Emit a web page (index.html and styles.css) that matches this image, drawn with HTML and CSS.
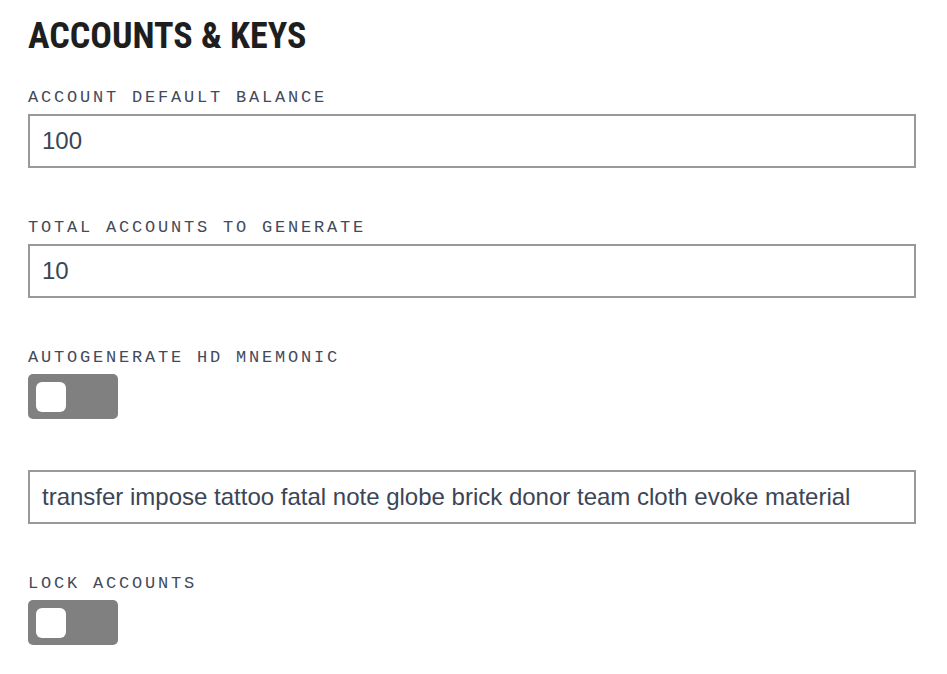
FILE: index.html
```html
<!DOCTYPE html>
<html>
<head>
<meta charset="utf-8">
<link rel="stylesheet" href="styles.css">
</head>
<body>
<div class="page">
  <h1 class="title">ACCOUNTS &amp; KEYS</h1>
  <div class="group">
    <div class="label">ACCOUNT DEFAULT BALANCE</div>
    <div class="input">100</div>
  </div>
  <div class="group">
    <div class="label">TOTAL ACCOUNTS TO GENERATE</div>
    <div class="input">10</div>
  </div>
  <div class="group group-toggle">
    <div class="label">AUTOGENERATE HD MNEMONIC</div>
    <div class="toggle"><span class="knob"></span></div>
  </div>
  <div class="group">
    <div class="input">transfer impose tattoo fatal note globe brick donor team cloth evoke material</div>
  </div>
  <div class="group group-toggle">
    <div class="label">LOCK ACCOUNTS</div>
    <div class="toggle"><span class="knob"></span></div>
  </div>
</div>
</body>
</html>
```

FILE: styles.css
```css
html, body {
  margin: 0;
  padding: 0;
  background: #ffffff;
}
.page {
  padding: 14px 31px 0 28px;
  display: flex;
  flex-direction: column;
}
.title {
  margin: 0 0 28px 0;
  font-family: "Roboto Condensed", "Liberation Sans Narrow", "Roboto", sans-serif;
  font-weight: 700;
  font-size: 36px;
  line-height: 44px;
  color: #1e1e1e;
}
.group {
  display: flex;
  flex-direction: column;
  margin-bottom: 48px;
}
.group-toggle {
  margin-bottom: 51px;
}
.label {
  font-family: "Liberation Mono", "DejaVu Sans Mono", monospace;
  font-size: 17px;
  line-height: 20px;
  letter-spacing: 2.8px;
  color: #434a5a;
  padding-top: 2px;
  margin-bottom: 6px;
}
.input {
  box-sizing: border-box;
  height: 54px;
  border: 2px solid #999999;
  padding: 0 12px;
  display: flex;
  align-items: center;
  font-family: "Liberation Sans", Arial, sans-serif;
  font-size: 24px;
  color: #3b4556;
  white-space: nowrap;
}
.toggle {
  width: 90px;
  height: 45px;
  border-radius: 5px;
  background: #808080;
  display: flex;
  align-items: center;
  padding-left: 8px;
  box-sizing: border-box;
}
.knob {
  width: 30px;
  height: 30px;
  border-radius: 6px;
  background: #ffffff;
}
```
